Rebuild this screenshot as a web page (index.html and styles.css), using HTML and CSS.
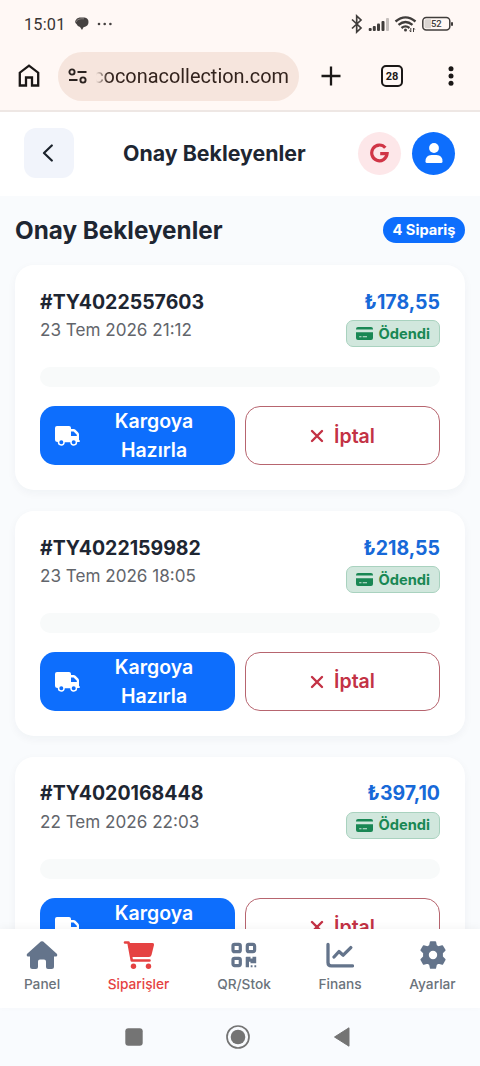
FILE: index.html
```html
<!DOCTYPE html>
<html lang="tr">
<head>
<meta charset="utf-8">
<meta name="viewport" content="width=device-width, initial-scale=1">
<title>Onay Bekleyenler</title>
<link rel="stylesheet" href="styles.css">
</head>
<body>
<svg class="sprite" width="0" height="0">
  <symbol id="truck" viewBox="0 0 25 20">
    <path fill="currentColor" fill-rule="evenodd" d="M2 0H14Q16 0 16 2V3H18.500Q19.700 3 20.500 3.800L23.200 6.600Q24 7.400 24 8.500V14Q25 14.300 25 15Q25 16 24 16H22.200A3.500 3.500 0 0 1 15.200 16.300H9.800A3.500 3.500 0 0 1 2.800 16Q0 16 0 13.500V2Q0 0 2 0ZM16 5.500V10H21.800V8.700L18.600 5.500ZM6.300 14.300A2 2 0 1 0 6.300 18.300A2 2 0 1 0 6.300 14.300ZM18.700 14.300A2 2 0 1 0 18.700 18.300A2 2 0 1 0 18.700 14.300Z"/>
  </symbol>
  <symbol id="card" viewBox="0 0 17 13">
    <path fill="currentColor" fill-rule="evenodd" d="M2 0H15Q17 0 17 2V2.600H0V2Q0 0 2 0ZM0 5.200H17V11Q17 13 15 13H2Q0 13 0 11ZM3.200 9.200V10.200H5.500V9.200ZM6.700 9.200V10.200H11V9.200Z"/>
  </symbol>
  <symbol id="cross" viewBox="0 0 14 14">
    <path d="M2 2L12 12M12 2L2 12" fill="none" stroke="currentColor" stroke-width="2.400" stroke-linecap="round"/>
  </symbol>
</svg>
<div class="screen">
  <div class="status">
    <span class="clock">15:01</span>
    <svg class="chat" width="14" height="14" viewBox="0 0 14 14"><path d="M4.500 .5H9.500Q13.500 1 13.500 5Q13.500 9.500 8.500 10.200L7 13L5 10Q2.500 9.500 1.500 7Q-.5 5.500 .5 3.500Q1.500 .8 4.500 .5Z" fill="#454140"/><path d="M1 5Q2 1.800 6 1.800H9" fill="none" stroke="#9c9693" stroke-width=".7"/></svg>
    <svg class="dots" width="16" height="4" viewBox="0 0 16 4"><g fill="#454140"><circle cx="2" cy="2" r="1.300"/><circle cx="7.700" cy="2" r="1.300"/><circle cx="13.400" cy="2" r="1.300"/></g></svg>
    <svg class="signals" width="104" height="20" viewBox="0 0 104 20">
      <path d="M2 5.500L11 14L6.700 18V2L11 6L2 14.500" fill="none" stroke="#403d3b" stroke-width="1.700"/>
      <g fill="#403d3b"><rect x="18.700" y="14" width="3" height="3" rx="1"/><rect x="22.800" y="12" width="3" height="5" rx="1"/><rect x="27" y="9.500" width="3" height="7.500" rx="1"/><rect x="31.500" y="7" width="3" height="10" rx="1"/></g><rect x="36" y="4" width="3" height="13" rx="1" fill="#c5bfbc"/>
      <path d="M45.500 7.500Q55.500 -.8 65.500 7.500M48.500 10.800Q55.500 5.200 62.500 10.800M51.500 14Q55.500 10.800 59.500 14" fill="none" stroke="#403d3b" stroke-width="2.300"/><circle cx="55.500" cy="16" r="1.500" fill="#403d3b"/><path d="M60.800 14v4M60.800 18l-1.300-1.500M63.500 18v-4l1.300 1.500" fill="none" stroke="#403d3b"/>
      <rect x="72.800" y="3.500" width="27" height="12.500" rx="3.500" fill="#fff8f5" stroke="#403d3b" stroke-width="1.500"/><path d="M76 5.300H81V14.300H76Q74.500 14.300 74.500 12.500V7Q74.500 5.300 76 5.300Z" fill="#dad5d2"/><rect x="101" y="8" width="2" height="4" rx="1" fill="#403d3b"/>
      <text x="86.300" y="13.400" text-anchor="middle" class="battery-text">52</text>
    </svg>
  </div>
  <div class="browser">
    <svg class="home" width="22" height="24" viewBox="0 0 22 24"><path d="M1.800 21.500V8.700L11 1.700L20.200 8.700V21.500H14V13.500H8V21.500Z" fill="none" stroke="#1b1817" stroke-width="2.300"/></svg>
    <div class="address">
      <svg width="20" height="16" viewBox="0 0 20 16"><g fill="none" stroke="#2b2320" stroke-width="1.900"><circle cx="4" cy="4" r="2.600"/><path d="M9.500 4H18.500M1 12H9.500"/><circle cx="15" cy="12" r="2.600"/></g></svg>
      <div class="url"><span>coconacollection.com</span></div>
    </div>
    <svg class="plus" width="20" height="20" viewBox="0 0 20 20"><path d="M10 .5V19.500M.5 10H19.500" stroke="#1b1817" stroke-width="2.300"/></svg>
    <div class="tabs">28</div>
    <svg class="more" width="6" height="20" viewBox="0 0 6 20"><g fill="#1b1817"><circle cx="3" cy="2.800" r="2.500"/><circle cx="3" cy="10" r="2.500"/><circle cx="3" cy="17.200" r="2.500"/></g></svg>
  </div>
  <header class="app-header">
    <div class="back"><svg width="12" height="18" viewBox="0 0 12 18"><path d="M9.800 1.500L2 9L9.800 16.500" fill="none" stroke="#1b222b" stroke-width="2.200" stroke-linecap="round" stroke-linejoin="round"/></svg></div>
    <h1>Onay Bekleyenler</h1>
    <div class="round google"><svg width="20" height="20" viewBox="0 0 20 20"><path d="M15.300 4.800A7.700 7.900 0 1 0 17.100 10.700H10.200" fill="none" stroke="#d03546" stroke-width="3.200"/></svg></div>
    <div class="round user"><svg width="18" height="20" viewBox="0 0 18 20"><circle cx="9" cy="5" r="4.900" fill="#fff"/><path d="M.5 18.500Q.5 12 6.500 12H11.500Q17.500 12 17.500 18.500Q17.500 20 16 20H2Q.5 20 .5 18.500Z" fill="#fff"/></svg></div>
  </header>
  <main>
    <div class="heading"><h2>Onay Bekleyenler</h2><span class="count">4 Sipariş</span></div>
    <article class="order">
      <div class="row"><strong class="number">#TY4022557603</strong><strong class="price">₺178,55</strong></div>
      <div class="row meta"><span class="date">23 Tem 2026 21:12</span><span class="paid"><svg width="17" height="13"><use href="#card"/></svg>Ödendi</span></div>
      <div class="placeholder"></div>
      <div class="actions"><div class="ship"><svg width="25" height="20"><use href="#truck"/></svg><span>Kargoya Hazırla</span></div><div class="cancel"><svg width="14" height="14"><use href="#cross"/></svg><span>İptal</span></div></div>
    </article>
    <article class="order">
      <div class="row"><strong class="number">#TY4022159982</strong><strong class="price">₺218,55</strong></div>
      <div class="row meta"><span class="date">23 Tem 2026 18:05</span><span class="paid"><svg width="17" height="13"><use href="#card"/></svg>Ödendi</span></div>
      <div class="placeholder"></div>
      <div class="actions"><div class="ship"><svg width="25" height="20"><use href="#truck"/></svg><span>Kargoya Hazırla</span></div><div class="cancel"><svg width="14" height="14"><use href="#cross"/></svg><span>İptal</span></div></div>
    </article>
    <article class="order">
      <div class="row"><strong class="number">#TY4020168448</strong><strong class="price">₺397,10</strong></div>
      <div class="row meta"><span class="date">22 Tem 2026 22:03</span><span class="paid"><svg width="17" height="13"><use href="#card"/></svg>Ödendi</span></div>
      <div class="placeholder"></div>
      <div class="actions"><div class="ship"><svg width="25" height="20"><use href="#truck"/></svg><span>Kargoya Hazırla</span></div><div class="cancel"><svg width="14" height="14"><use href="#cross"/></svg><span>İptal</span></div></div>
    </article>
  </main>
  <nav class="bottom">
    <div class="tab"><svg width="32" height="28" viewBox="0 0 32 28"><path d="M14.800 .6Q16 -.3 17.200 .6L30.800 12.800Q31.900 14.300 30.500 15.500H28V25.500Q28 28 25.500 28H22Q20 28 20 26V20.500Q20 18.500 18 18.500H14Q12 18.500 12 20.500V26Q12 28 10 28H6.500Q4 28 4 25.500V15.500H1.500Q0 14.300 1.200 12.800Z" fill="currentColor"/></svg><span>Panel</span></div>
    <div class="tab active"><svg width="32" height="28" viewBox="0 0 32 28"><path d="M2 1.500H5.500L8.800 19.500H26.500" fill="none" stroke="currentColor" stroke-width="2.600" stroke-linecap="round" stroke-linejoin="round"/><path d="M6 2H29.500Q31.400 2 31 4L28.500 14Q28 16 26 16H8.800Z" fill="currentColor"/><circle cx="10.500" cy="25.300" r="2.700" fill="currentColor"/><circle cx="25.500" cy="25.300" r="2.700" fill="currentColor"/></svg><span>Siparişler</span></div>
    <div class="tab"><svg width="26" height="28" viewBox="0 0 26 28"><g fill="none" stroke="currentColor" stroke-width="3.200"><rect x="2" y="3.400" width="7.300" height="7.300" rx="1.500"/><rect x="16.300" y="3.400" width="7.300" height="7.300" rx="1.500"/><rect x="2" y="17.300" width="7.300" height="7.300" rx="1.500"/></g><path d="M15.500 15.700H19.500V17.500H21.500V15.700H25.200V22.300H19.500V20.700H18V26.200H14.700V16.500Q14.700 15.700 15.500 15.700ZM19.700 24.300H21.500V26.200H19.700ZM23.400 24.300H25.200V26.200H23.400Z" fill="currentColor"/></svg><span>QR/Stok</span></div>
    <div class="tab"><svg width="28" height="28" viewBox="0 0 28 28"><path d="M2 3.500V21.500Q2 24.800 5.300 24.800H26.500M8 16L13 10.500L17.200 14.200L24.800 6.600" fill="none" stroke="currentColor" stroke-width="3.300" stroke-linecap="round" stroke-linejoin="round"/></svg><span>Finans</span></div>
    <div class="tab"><svg width="28" height="28" viewBox="0 0 28 28"><path fill="currentColor" fill-rule="evenodd" stroke="currentColor" stroke-width="1.600" stroke-linejoin="round" d="M11.700 1H16.300L17.100 4.700L19.500 6.100L23.200 5L25.800 9.200L23.100 11.800V15.800L25.800 18.600L23.300 23L19.600 21.900L17.100 23.400L16.300 27H11.700L10.900 23.400L8.400 21.900L4.700 23L2.200 18.600L4.900 15.800V11.800L2.200 9.200L4.700 5L8.400 6.100L10.900 4.700ZM14 9A5 5 0 1 0 14 19A5 5 0 1 0 14 9Z"/></svg><span>Ayarlar</span></div>
  </nav>
  <div class="system">
    <svg width="18" height="18" viewBox="0 0 18 18"><rect x=".3" y=".3" width="17.400" height="17.400" rx="3" fill="#747474"/></svg>
    <svg width="24" height="24" viewBox="0 0 24 24"><circle cx="12" cy="12" r="11" fill="none" stroke="#747474" stroke-width="1.700"/><circle cx="12" cy="12" r="7.300" fill="#747474"/></svg>
    <svg width="18" height="20" viewBox="0 0 18 20"><path d="M16 .8V19.200L1.500 10Z" fill="#747474" stroke="#747474" stroke-linejoin="round"/></svg>
  </div>
</div>
</body>
</html>
```
FILE: styles.css
```css
* { box-sizing: border-box; }
body { margin: 0; font-family: Inter, sans-serif; color: #1e2632; }
h1, h2 { margin: 0; font-weight: 700; }
svg { display: block; flex: none; }
.sprite { position: absolute; }
.screen { width: 480px; height: 1066px; display: flex; flex-direction: column; overflow: hidden; background: #f9fbfd; }
.status { height: 48px; flex: none; display: flex; align-items: center; padding: 0 26px 0 24px; background: #fff8f5; }
.clock { width: 41px; font: 400 16.300px Roboto, sans-serif; letter-spacing: .2px; color: #383433; }
.chat { margin-left: 10px; }
.dots { margin-left: 8px; }
.signals { margin-left: auto; }
.battery-text { font: 500 9.500px Roboto, sans-serif; fill: #403d3b; }
.browser { height: 64px; flex: none; display: flex; align-items: center; padding: 0 26px 6px 18px; background: #fff8f5; border-bottom: 2px solid #eee7e4; }
.address { width: 241px; height: 49px; display: flex; align-items: center; margin-left: 18px; padding-left: 10px; border-radius: 25px; background: #f6e5dd; }
.url { width: 193px; margin-left: 8px; display: flex; justify-content: flex-end; overflow: hidden; font: 400 19.900px Roboto, sans-serif; letter-spacing: 0; color: #33231d; -webkit-mask-image: linear-gradient(90deg, transparent, #000 12px); mask-image: linear-gradient(90deg, transparent, #000 12px); }
.plus { margin-left: 22px; }
.tabs { width: 22px; height: 22px; margin-left: 40px; display: flex; align-items: center; justify-content: center; border: 2px solid #1b1817; border-radius: 5px; font: 700 11px Roboto, sans-serif; color: #1b1817; }
.more { margin-left: auto; }
.app-header { height: 84px; flex: none; display: flex; align-items: center; padding: 0 25px 2px 24px; background: #fff; }
.back { width: 50px; height: 50px; display: flex; align-items: center; justify-content: center; padding-right: 2px; border-radius: 12px; background: #f1f4fb; }
h1 { width: 186px; margin-left: 49px; padding-bottom: 1px; font-size: 21.350px; white-space: nowrap; }
.round { width: 43px; height: 43px; border-radius: 50%; display: flex; align-items: center; justify-content: center; }
.google { margin-left: auto; background: #fde7e9; }
.user { margin-left: 11px; background: #0d6efd; }
main { flex: 1; min-height: 0; overflow: hidden; padding: 0 15px; }
.heading { height: 69.300px; display: flex; justify-content: space-between; align-items: center; padding-bottom: 1px; }
h2 { font-size: 24.250px; }
.count { height: 26px; padding: 0 9.500px; border-radius: 13px; background: #0d6efd; color: #fff; font-size: 14.650px; line-height: 26px; font-weight: 700; }
.order { height: 225.200px; margin-bottom: 20.600px; padding: 21px 25px 0; border-radius: 19px; background: #fff; box-shadow: 0 3px 10px rgba(30, 50, 70, .045); }
.row { height: 31px; display: flex; justify-content: space-between; align-items: center; }
.number, .price { font-size: 19.500px; font-weight: 700; }
.price { color: #1769d8; }
.meta { height: 32px; align-items: flex-start; }
.date { font-size: 17.100px; line-height: 26px; color: #62656b; }
.paid { height: 27px; margin-top: 3px; padding: 0 9px; display: flex; align-items: center; gap: 5px; border: 1px solid #a9d2bf; border-radius: 7px; background: #d1e7dd; color: #198754; font-size: 14.650px; font-weight: 700; }
.placeholder { height: 20px; margin-top: 18px; border-radius: 10px; background: #f8fafa; }
.actions { display: grid; grid-template-columns: 1fr 1fr; gap: 10px; margin-top: 19px; }
.ship, .cancel { height: 59px; display: flex; align-items: center; border-radius: 15px; font-size: 19.500px; line-height: 29.300px; font-weight: 600; }
.ship { padding-left: 15px; background: #0d6efd; color: #fff; }
.ship span { flex: 1; padding: 1px 27px 0 20px; text-align: center; }
.cancel { justify-content: center; gap: 10px; border: 1px solid #b7656f; color: #c33245; }
.cancel span { padding-top: 1px; }
.bottom { height: 79px; flex: none; display: grid; grid-template-columns: 84px 109px 102px 90px 95px; background: #fff; box-shadow: 0 -2px 8px rgba(0, 0, 0, .04); position: relative; }
.tab { display: flex; flex-direction: column; align-items: center; padding-top: 12px; color: #64748b; }
.tab span { margin-top: 6px; font-size: 13.700px; line-height: 18px; font-weight: 500; color: #6b737b; }
.tab.active, .tab.active span { color: #e54242; }
.system { height: 58px; flex: none; display: flex; align-items: center; gap: 83px; padding: 0 0 1px 125px; background: #f9fbfe; }
```
